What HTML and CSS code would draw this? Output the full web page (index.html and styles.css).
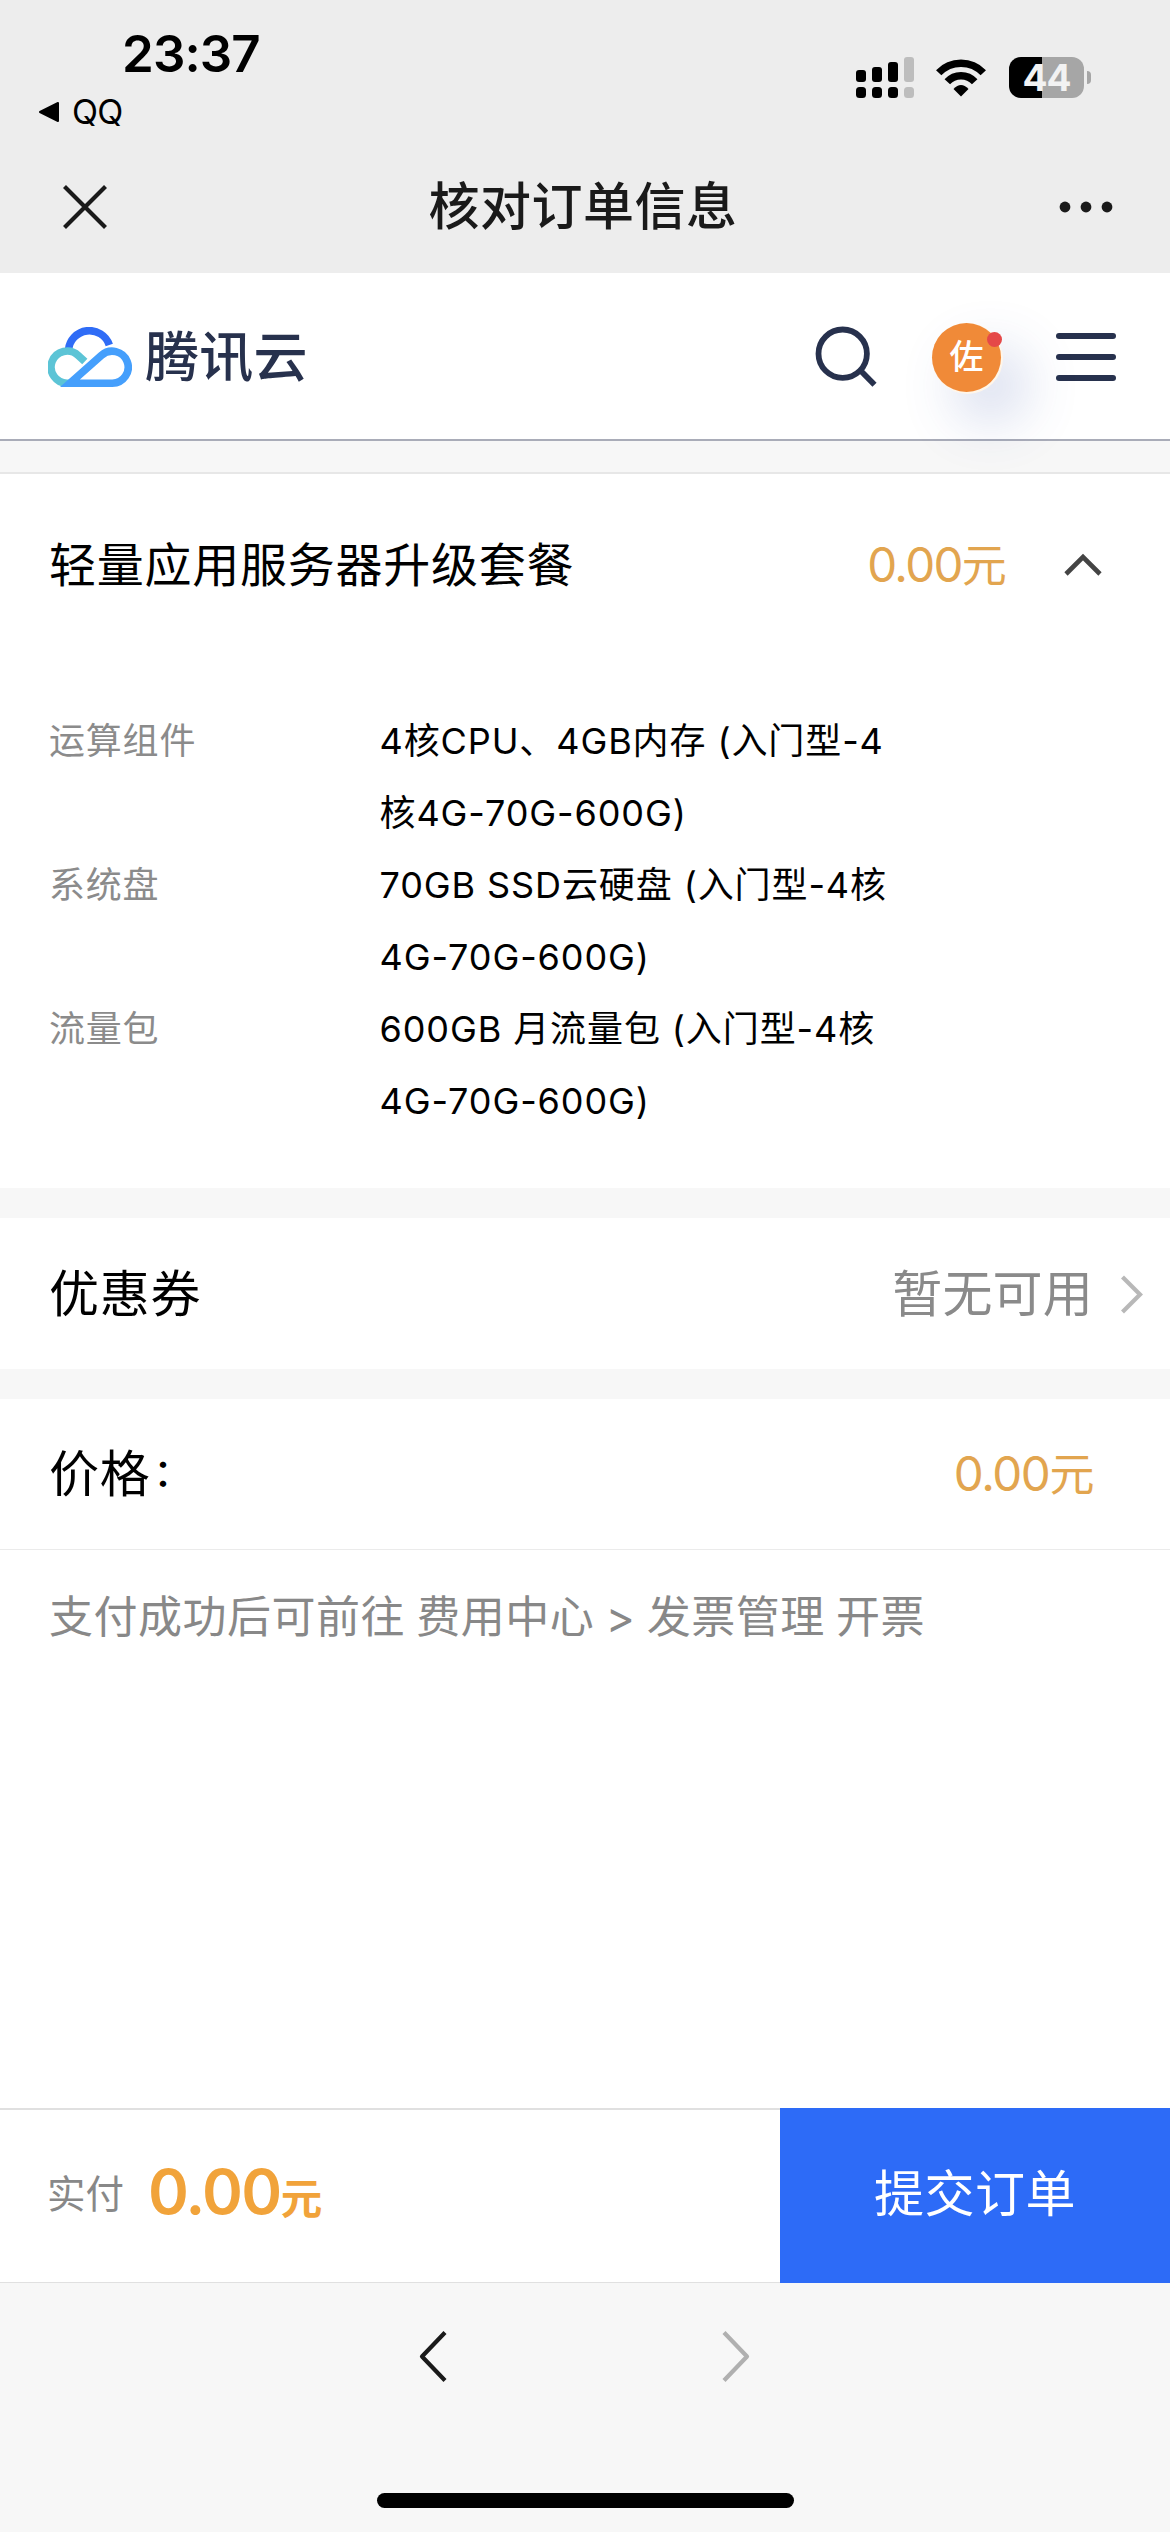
FILE: index.html
```html
<!DOCTYPE html>
<html lang="zh-CN">
<head>
<meta charset="utf-8">
<title>核对订单信息</title>
<link rel="stylesheet" href="styles.css">
</head>
<body>
<div class="screen">
  <div class="status">
    <div class="status-left">
      <div class="time">23:37</div>
      <div class="back-app">
        <svg width="22" height="22" viewBox="0 0 22 22"><path d="M2 11 20 2V20Z" fill="#000" stroke="#000" stroke-width="2" stroke-linejoin="round"/></svg>
        <span>QQ</span>
      </div>
    </div>
    <div class="status-right">
      <svg width="58" height="41" viewBox="0 0 58 41">
        <rect x="0" y="13" width="10" height="12" rx="3"/><rect x="16" y="10" width="10" height="15" rx="3"/><rect x="32" y="5" width="10" height="20" rx="3"/><rect x="48" y="0" width="10" height="25" rx="3" fill="#bdbdbd"/>
        <rect x="0" y="30" width="10" height="11" rx="3.5"/><rect x="16" y="30" width="10" height="11" rx="3.5"/><rect x="32" y="30" width="10" height="11" rx="3.5"/><rect x="48" y="30" width="10" height="11" rx="3.5" fill="#bdbdbd"/>
      </svg>
      <svg class="wifi" width="50" height="38" viewBox="0 0 50 38" fill="none" stroke="#000" stroke-width="7.4">
        <path d="M2.7 13.7A30.9 30.9 0 0 1 47.3 13.7M11.3 22.8A18.5 18.5 0 0 1 38.7 22.8"/>
        <path d="M17.5 30Q25 22 32.5 30L25 37.5Z" fill="#000" stroke="none"/>
      </svg>
      <div class="battery">44</div>
      <div class="battery-cap"></div>
    </div>
  </div>
  <div class="navbar">
    <svg width="44" height="44" viewBox="0 0 44 44" fill="none" stroke="#1a1a1a" stroke-width="4.2"><path d="M1.5 1.5 42.5 42.5M42.5 1.5 1.5 42.5"/></svg>
    <div class="nav-title">核对订单信息</div>
    <svg width="54" height="12" viewBox="0 0 54 12" fill="#1a1a1a"><circle cx="6" cy="6" r="5.4"/><circle cx="27" cy="6" r="5.4"/><circle cx="48" cy="6" r="5.4"/></svg>
  </div>

  <div class="site-header">
    <svg width="84" height="60" viewBox="0 0 84 60" fill="none" stroke-width="7.6">
      <path d="M20.5 23A21 21 0 0 1 61.3 17.9" stroke="#2f6cf6"/>
      <path d="M36.8 34.6 30.2 28.4A16.1 16.1 0 1 0 19.8 56.2H24" stroke="#5cc4d6"/>
      <path d="M64.3 56.2H22L53.4 28.4A16 16 0 1 1 64.3 56.2Z" stroke="#459ffc"/>
    </svg>
    <div class="brand">腾讯云</div>
    <svg class="search" width="62" height="62" viewBox="0 0 62 62" fill="none" stroke="#27314d" stroke-width="5.8"><circle cx="27.7" cy="27.7" r="24.2"/><path d="M44.5 43.5 59.5 58.8"/></svg>
    <div class="avatar">佐<span class="dot"></span></div>
    <div class="menu"><i></i><i></i><i></i></div>
  </div>
  <div class="band band-top"></div>

  <div class="product">
    <div class="product-name">轻量应用服务器升级套餐</div>
    <div class="price">0.00<span class="yuan">元</span></div>
    <svg width="38" height="24" viewBox="0 0 38 24" fill="none" stroke="#444" stroke-width="4.6"><path d="M2 21 19 4 36 21"/></svg>
  </div>
  <div class="specs">
    <div class="label">运算组件</div>
    <div class="value">4核CPU、4GB内存 (入门型-4<br>核4G-70G-600G)</div>
    <div class="label">系统盘</div>
    <div class="value">70GB SSD云硬盘 (入门型-4核<br>4G-70G-600G)</div>
    <div class="label">流量包</div>
    <div class="value">600GB 月流量包 (入门型-4核<br>4G-70G-600G)</div>
  </div>
  <div class="band"></div>

  <div class="row coupon">
    <div class="row-name">优惠券</div>
    <div class="muted">暂无可用</div>
    <svg width="24" height="40" viewBox="0 0 24 40" fill="none" stroke="#b8b8b8" stroke-width="4.2"><path d="M2.5 3 20 20.5 2.5 38"/></svg>
  </div>
  <div class="band"></div>
  <div class="row total">
    <div class="row-name">价格<span class="colon">：</span></div>
    <div class="price">0.00<span class="yuan">元</span></div>
  </div>
  <div class="note">支付成功后可前往 费用中心 &gt; 发票管理 开票</div>

  <div class="paybar">
    <div class="pay-label">实付</div>
    <div class="pay-amount">0.00<span>元</span></div>
    <div class="submit">提交订单</div>
  </div>
  <div class="toolbar">
    <svg width="28" height="52" viewBox="0 0 28 52" fill="none" stroke="#1a1a1a" stroke-width="4.2" stroke-linejoin="round"><path d="M26 2.5 3 26.5 26 50.5"/></svg>
    <svg width="28" height="52" viewBox="0 0 28 52" fill="none" stroke="#b0b0b0" stroke-width="4.2" stroke-linejoin="round"><path d="M2 2.5 25 26.5 2 50.5"/></svg>
  </div>
  <div class="home"></div>
</div>
</body>
</html>
```
FILE: styles.css
```css
* { box-sizing: border-box; }
body { margin: 0; background: #fff; }
svg { display: block; flex: none; }
.screen {
  width: 1170px; height: 2532px; overflow: hidden;
  display: flex; flex-direction: column;
  font-family: Inter, "Noto Sans CJK SC", sans-serif;
  color: #000; background: #fff; white-space: nowrap;
}
.screen > div { flex: none; }

.status { height: 140px; background: #ededed; display: flex; justify-content: space-between; }
.status-left { padding-top: 28px; }
.time { margin-left: 122px; font-size: 51px; line-height: 52px; font-weight: 600; letter-spacing: -0.9px; }
.back-app { display: flex; align-items: center; gap: 12px; margin: 12px 0 0 38px; font-size: 34px; line-height: 40px; letter-spacing: -0.8px; }
.status-right { display: flex; align-items: flex-start; padding: 57px 79px 0 0; }
.wifi { margin: 2px 23px 0 22px; }
.battery {
  width: 75px; height: 41px; border-radius: 12px;
  background: linear-gradient(to right, #000 33px, #a6a6a6 33px);
  color: #f2f2f2; font-size: 37px; line-height: 41px; font-weight: 700; text-align: center; letter-spacing: -1px;
}
.battery-cap { width: 4px; height: 13px; margin: 14px 0 0 3px; border-radius: 0 5px 5px 0; background: #a6a6a6; }

.navbar { height: 133px; background: #ededed; display: flex; justify-content: space-between; align-items: center; padding: 0 57px 0 63px; color: #1a1a1a; }
.nav-title { font-size: 51px; line-height: 60px; font-weight: 500; letter-spacing: 0.5px; }

.site-header {
  height: 168px; display: flex; align-items: center;
  padding: 2px 54px 0 48px; border-bottom: 2px solid #a9acb8; color: #27314d;
}
.brand { margin-left: 13px; padding-top: 2px; font-size: 54px; line-height: 60px; font-weight: 500; letter-spacing: 0.3px; }
.search { margin-left: auto; }
.avatar {
  position: relative; width: 69px; height: 69px; margin: 0 55px; border-radius: 50%;
  background: #f08a38; color: #fff; font-size: 34px; line-height: 67px; text-align: center; font-weight: 500;
  box-shadow: 1px 1px 0 1px #fff6ea, 24px 28px 56px rgba(55, 80, 170, 0.23);
}
.dot { position: absolute; right: -1px; top: 9px; width: 15px; height: 15px; border-radius: 50%; background: #e54848; }
.menu { width: 60px; height: 48px; display: flex; flex-direction: column; justify-content: space-between; }
.menu i { height: 6px; border-radius: 3px; background: #27314d; }

.band { height: 30px; background: #f7f7f7; }
.band-top { height: 33px; border-bottom: 2px solid #e7e7e7; }

.product { height: 182px; display: flex; align-items: center; padding: 0 68px 0 49px; }
.product-name { font-size: 47px; line-height: 60px; letter-spacing: 0.75px; flex: 1; }
.price { font-size: 47.5px; line-height: 60px; color: #e2a54f; letter-spacing: -1.7px; }
.product .price { margin-right: 59px; }
.yuan { font-size: 45px; }

.specs {
  height: 532px; padding: 49px 0 0 49px; display: grid; align-content: start;
  grid-template-columns: 330.5px 1fr; font-size: 36px; line-height: 72px;
}
.label { color: #8b8b8b; letter-spacing: 0.8px; }
.value { letter-spacing: 0.9px; }

.row { height: 151px; display: flex; align-items: center; padding: 0 26px 0 49px; }
.row-name { font-size: 50px; line-height: 60px; letter-spacing: 0.8px; flex: 1; }
.muted { font-size: 50px; line-height: 60px; color: #8a8a8a; margin-right: 27px; letter-spacing: 0.2px; }
.total { border-bottom: 1px solid #ebebeb; padding-right: 77px; }
.total .price { letter-spacing: -1.4px; }
.colon { vertical-align: 6px; line-height: 1; font-size: 38px; font-weight: 500; margin-left: 3px; }
.note { height: 558px; padding: 37px 0 0 49px; font-size: 44px; line-height: 60px; letter-spacing: 0.5px; word-spacing: -1.5px; color: #888; }

.paybar { height: 175px; display: flex; align-items: center; border-top: 2px solid #e0e0e0; border-bottom: 1px solid #e0e0e0; padding-left: 47px; }
.pay-label { font-size: 38.5px; line-height: 50px; color: #888; padding-bottom: 5px; }
.pay-amount { margin-left: 24px; font-size: 62px; line-height: 70px; font-weight: 600; color: #f1a33a; flex: 1; letter-spacing: -1.6px; padding-bottom: 1px; }
.pay-amount span { font-size: 41.5px; font-weight: 700; }
.submit { align-self: stretch; width: 390px; margin: -2px 0 -1px; background: #2d6bf7; color: #fff; font-size: 50px; line-height: 172px; text-align: center; letter-spacing: 0.5px; }

.toolbar { height: 210px; background: #f7f7f7; display: flex; gap: 275px; padding: 47px 0 0 419px; }
.home { height: 39px; background: #f7f7f7; }
.home::before { content: ""; display: block; width: 417px; height: 15px; border-radius: 8px; margin: 0 auto; background: #000; }
```
